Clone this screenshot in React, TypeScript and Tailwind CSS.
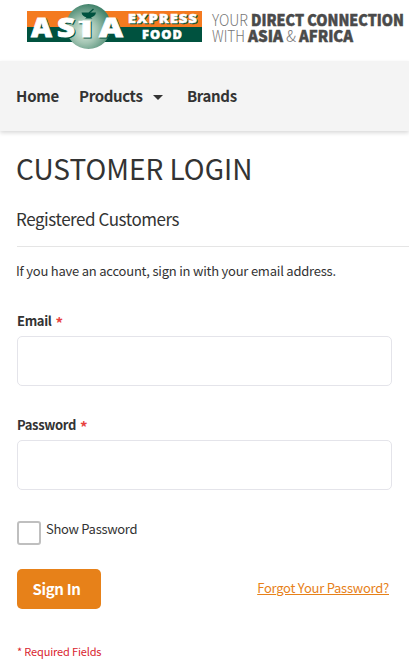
import { useState } from 'react'

function Logo() {
  return (
    <svg width="380" height="48" viewBox="27 2 380 48" className="block overflow-visible">
      <defs>
        <radialGradient id="globe" cx="42%" cy="60%" r="60%">
          <stop offset="0" stopColor="#dcebe0" />
          <stop offset="0.45" stopColor="#a3c5b3" />
          <stop offset="1" stopColor="#43846c" />
        </radialGradient>
      </defs>
      <rect x="27" y="11" width="175" height="16" fill="#f47a20" />
      <rect x="27" y="27" width="175" height="15" fill="#00523f" />
      <circle cx="88.5" cy="26.5" r="22.5" fill="url(#globe)" />
      {/* Mortar and pestle */}
      <path d="M81.500 12.500h14.500c-.5 3-2.500 4.300-5 4.700l1.500 1.300h-7.500l1.500-1.300c-2.500-.5-4.500-1.700-5-4.700z" fill="#00523f" />
      <path d="M89 13l4.500-4" stroke="#00523f" strokeWidth="1.300" />
      <g fontFamily='"Noto Sans", sans-serif' fontWeight="900" fontSize="26">
        {['#00523f', '#fff'].map((fill, i) => (
          <g key={fill} fill={fill} stroke={fill} strokeWidth="0.8" transform={i === 0 ? 'translate(1 1)' : undefined}>
            <text x="31" y="36.500" textLength="21" lengthAdjust="spacingAndGlyphs">A</text>
            <text x="57" y="36.500" textLength="18" lengthAdjust="spacingAndGlyphs">S</text>
            <text x="80.500" y="36.500" textLength="12" lengthAdjust="spacingAndGlyphs" fontSize="29">ı</text>
            <path d="M78.500 20.800h6v2.500h-6z" stroke="none" />
            <text x="99" y="36.500" textLength="24" lengthAdjust="spacingAndGlyphs">A</text>
          </g>
        ))}
      </g>
      <g fontFamily='"Noto Sans", sans-serif' fontWeight="900" fontSize="12">
        <g strokeWidth="0.5" letterSpacing="1">
          <text x="129" y="24" textLength="70" lengthAdjust="spacingAndGlyphs" fill="#00523f" stroke="#00523f">EXPRESS</text>
          <text x="128" y="23" textLength="70" lengthAdjust="spacingAndGlyphs" fill="#fff" stroke="#fff">EXPRESS</text>
          <text x="142" y="38.500" textLength="41" lengthAdjust="spacingAndGlyphs" fill="#fff" stroke="#fff">FOOD</text>
        </g>
      </g>
      <g fontFamily='"Noto Sans CJK SC", "Noto Sans", sans-serif' fontSize="15.500">
        <g fontWeight="300" fill="#777">
          <text x="212" y="26" textLength="36" lengthAdjust="spacingAndGlyphs">YOUR</text>
          <text x="212" y="41.500" textLength="33" lengthAdjust="spacingAndGlyphs">WITH</text>
          <text x="286" y="41.500" textLength="10" lengthAdjust="spacingAndGlyphs">&amp;</text>
        </g>
        <g fontWeight="900" fill="#4a4a4a" stroke="#4a4a4a" strokeWidth="0.5">
          <text x="251" y="26" textLength="153" lengthAdjust="spacingAndGlyphs">DIRECT CONNECTION</text>
          <text x="248" y="41.500" textLength="35" lengthAdjust="spacingAndGlyphs">ASIA</text>
          <text x="299" y="41.500" textLength="54" lengthAdjust="spacingAndGlyphs">AFRICA</text>
        </g>
      </g>
    </svg>
  )
}

interface FieldProps {
  id: string
  label: string
  type: string
}

function Field({ id, label, type }: FieldProps) {
  const [value, setValue] = useState('')

  return (
    <div>
      <label htmlFor={id} className="flex h-5 items-center gap-1 text-[13px] leading-5 font-bold tracking-[-0.35px]">
        {label}
        <span className="pt-[3px] text-[15px] text-[#e8433f]">*</span>
      </label>
      <input
        id={id}
        type={type}
        value={value}
        onChange={e => setValue(e.target.value)}
        className="mt-[5px] block h-[50px] w-[375px] rounded-[5px] border border-[#e4e4ea] bg-white px-3 text-sm outline-none"
      />
    </div>
  )
}

export default function App() {
  const [showPassword, setShowPassword] = useState(false)

  return (
    <div className="h-[670px] w-full overflow-hidden bg-white font-['Noto_Sans_CJK_SC','Noto_Sans',sans-serif] text-[#333]">
      {/* Header */}
      <header className="h-[61px] pt-[2px] pl-[27px]">
        <Logo />
      </header>

      <nav className="flex h-[70px] items-center bg-[#f4f4f4] pl-4 text-[15px] leading-5 font-bold tracking-[-0.35px] shadow-[0_2px_4px_rgba(0,0,0,0.15)]">
        <a href="#" className="w-[63px] tracking-[-0.2px]">Home</a>
        <a href="#" className="flex w-[108px] items-center">
          <span className="w-[74px]">Products</span>
          <svg width="10" height="5" viewBox="0 0 10 5" className="mt-[3px]">
            <path d="M0 0h10L5 5z" fill="#333" />
          </svg>
        </a>
        <a href="#">Brands</a>
      </nav>

      <main className="pl-[17px]">
        <h1 className="-ml-px pt-[18px] text-[28px] leading-[38px]">CUSTOMER LOGIN</h1>
        <h2 className="-ml-px mt-[20px] pb-[15px] text-[17px] leading-6 tracking-[-0.45px]">Registered Customers</h2>
        <hr className="border-[#e5e5e5]" />
        <p className="-ml-px mt-[14px] text-[13px] leading-5 tracking-[-0.22px]">If you have an account, sign in with your email address.</p>

        <form className="mt-[30px]" onSubmit={e => e.preventDefault()}>
          <Field id="email" label="Email" type="email" />
          <div className="h-[29px]" />
          <Field id="password" label="Password" type={showPassword ? 'text' : 'password'} />

          <div className="mt-[31px] flex h-6 gap-[5px]">
            <input
              id="show"
              type="checkbox"
              checked={showPassword}
              onChange={e => setShowPassword(e.target.checked)}
              className="size-6 appearance-none rounded-[3px] border-2 border-[#bfbfbf] bg-white checked:bg-[#e78119]"
            />
            <label htmlFor="show" className="-mt-[2px] text-[13px] leading-5 tracking-[-0.3px]">Show Password</label>
          </div>

          <div className="mt-6 flex h-10 w-[372px] items-center justify-between">
            <button type="submit" className="h-10 w-[84px] rounded-[5px] bg-[#e78119] pr-[5px] text-[15px] font-bold tracking-[-0.35px] text-white">
              Sign In
            </button>
            <a href="#" className="-mt-[2px] text-[13px] leading-5 tracking-[-0.24px] text-[#e78119] underline">Forgot Your Password?</a>
          </div>
        </form>

        <p className="mt-[32px] text-[11px] leading-5 tracking-[-0.15px] text-[#d9232e]">* Required Fields</p>
      </main>
    </div>
  )
}
